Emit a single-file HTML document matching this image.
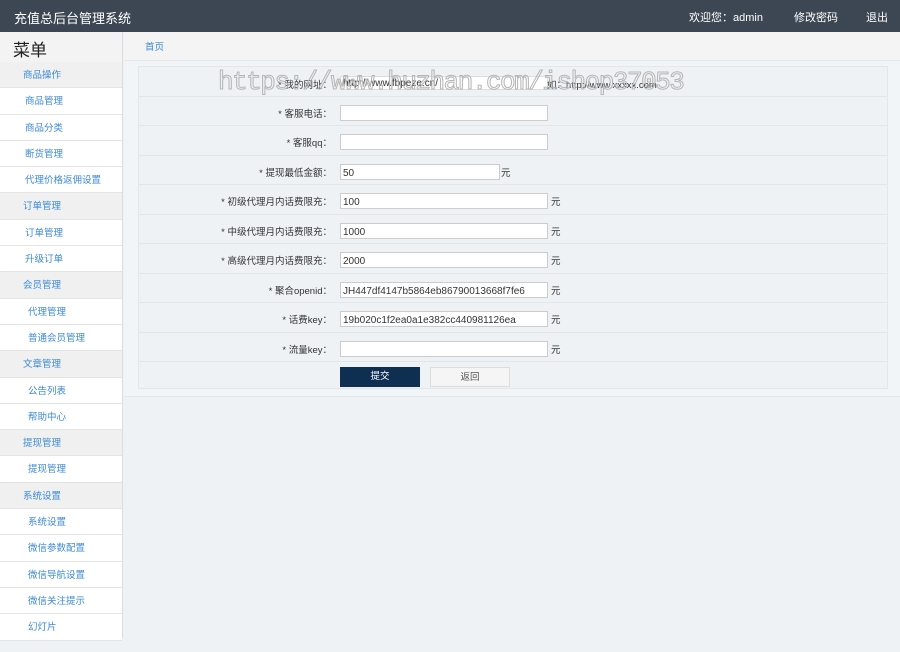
<!DOCTYPE html>
<html><head><meta charset="utf-8"><style>
*{margin:0;padding:0;box-sizing:border-box}
body{width:900px;height:652px;overflow:hidden;background:#eef2f5;font-family:"Liberation Sans","Noto Sans CJK SC",sans-serif;font-size:10px;color:#333;position:relative}
.top{position:absolute;left:0;top:0;width:900px;height:32px;background:#3c4753;color:#fff}
.top .t{position:absolute;left:14px;top:8px;font-size:13px}
.top .r{position:absolute;top:9px;font-size:11px}
.side{position:absolute;left:0;top:32px;width:123px;height:606px;background:#f3f3f3;border-right:1px solid #ddd;border-bottom:1px solid #ddd}
.side h2{font-size:17px;font-weight:normal;height:30px;padding:4px 0 0 13px;color:#222}
.it{height:26.3px;line-height:27px;background:#fff;border-bottom:1px solid #e4e4e4;color:#3d8ad6;padding-left:25px;font-size:9.5px}
.hd{background:#f0f0f0;padding-left:23px}
.sub{padding-left:28px}
.crumb{position:absolute;left:124px;top:32px;width:776px;height:29px;background:#f4f4f4;border-bottom:1px solid #e6e9ec;color:#3d8ad6;padding:7px 0 0 21px;font-size:9.5px}
.main{position:absolute;left:124px;top:61px;width:776px;height:336px;background:#f2f5f8;border-bottom:1px solid #e3e7ea}
.box{position:absolute;left:138px;top:66px;width:750px;height:323px;border:1px solid #e3e7ea;background:#eff2f5}
.row{position:absolute;left:0;width:748px;height:29.5px;border-bottom:1px solid #e2e6e9}
.lb{position:absolute;right:555px;top:9px;font-size:9.5px;white-space:nowrap}
.in{position:absolute;left:201px;top:8px;width:208px;height:16px;background:#fff;border:1px solid #ccc;font-size:10px;padding:3px 2px 0;white-space:nowrap;overflow:hidden}
.u{position:absolute;left:412px;top:9px;font-size:9.5px}
.btn{position:absolute;top:300px;width:80px;height:20px;text-align:center;line-height:20px;font-size:9.5px}
.wm{position:absolute;left:218px;top:67px;font-family:"Liberation Mono",monospace;font-size:26px;color:transparent;-webkit-text-stroke:1px #b5b5b5;white-space:nowrap;letter-spacing:-1.5px}
</style></head><body>
<div class="top"><span class="t">充值总后台管理系统</span><span class="r" style="left:689px">欢迎您：admin</span><span class="r" style="left:794px">修改密码</span><span class="r" style="left:866px">退出</span></div>
<div class="side"><h2>菜单</h2>
<div class="it hd">商品操作</div><div class="it">商品管理</div><div class="it">商品分类</div><div class="it">断货管理</div><div class="it">代理价格返佣设置</div>
<div class="it hd">订单管理</div><div class="it">订单管理</div><div class="it">升级订单</div>
<div class="it hd">会员管理</div><div class="it sub">代理管理</div><div class="it sub">普通会员管理</div>
<div class="it hd">文章管理</div><div class="it sub">公告列表</div><div class="it sub">帮助中心</div>
<div class="it hd">提现管理</div><div class="it sub">提现管理</div>
<div class="it hd">系统设置</div><div class="it sub">系统设置</div><div class="it sub">微信参数配置</div><div class="it sub">微信导航设置</div><div class="it sub">微信关注提示</div><div class="it sub">幻灯片</div>
</div>
<div class="crumb">首页</div>
<div class="main"></div>
<div class="box">
<div class="row" style="top:0"><span class="lb" style="top:10px">* 我的网址：</span><div class="in" style="top:9px;height:14px;border-color:#ddd;padding-top:1px">http://www.fbpeze.cn/</div><span class="u" style="top:10px;left:408px">如：http://www.xxxxx.com</span></div>
<div class="row" style="top:29.5px"><span class="lb">* 客服电话：</span><div class="in"></div></div>
<div class="row" style="top:59px"><span class="lb">* 客服qq：</span><div class="in"></div></div>
<div class="row" style="top:88.5px"><span class="lb">* 提现最低金额：</span><div class="in" style="width:160px">50</div><span class="u" style="left:362px">元</span></div>
<div class="row" style="top:118px"><span class="lb">* 初级代理月内话费限充：</span><div class="in">100</div><span class="u">元</span></div>
<div class="row" style="top:147.5px"><span class="lb">* 中级代理月内话费限充：</span><div class="in">1000</div><span class="u">元</span></div>
<div class="row" style="top:177px"><span class="lb">* 高级代理月内话费限充：</span><div class="in">2000</div><span class="u">元</span></div>
<div class="row" style="top:206.5px"><span class="lb">* 聚合openid：</span><div class="in">JH447df4147b5864eb86790013668f7fe6</div><span class="u">元</span></div>
<div class="row" style="top:236px"><span class="lb">* 话费key：</span><div class="in">19b020c1f2ea0a1e382cc440981126ea</div><span class="u">元</span></div>
<div class="row" style="top:265.5px"><span class="lb">* 流量key：</span><div class="in"></div><span class="u">元</span></div>
<div class="btn" style="left:201px;background:#0f2f52;color:#fff">提交</div>
<div class="btn" style="left:291px;background:#f5f5f5;border:1px solid #ddd;color:#555">返回</div>
</div>
<div class="wm">https://www.huzhan.com/ishop37053</div>
</body></html>
